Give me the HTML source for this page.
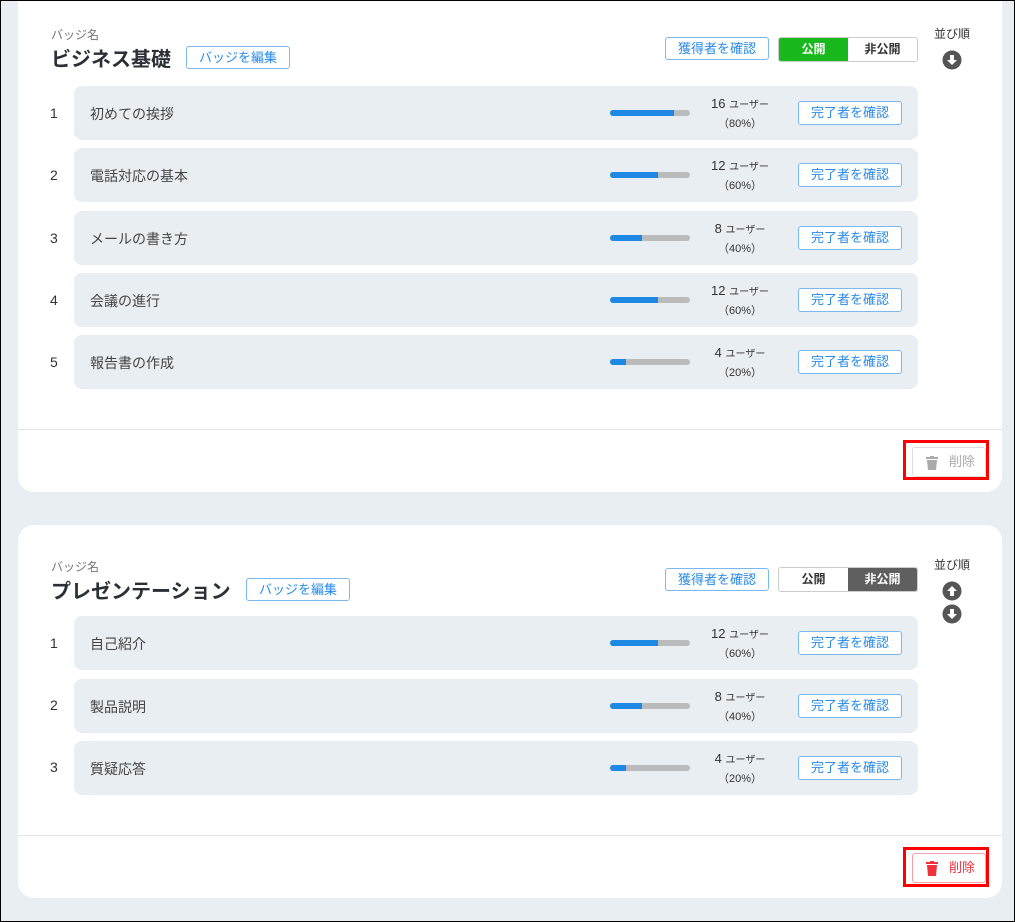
<!DOCTYPE html>
<html><head><meta charset="utf-8"><style>
*{box-sizing:border-box;margin:0;padding:0}
body{width:1015px;height:922px;background:#e9eef3;font-family:"Liberation Sans","Noto Sans CJK JP",sans-serif;position:relative;overflow:hidden;color:#333}
.frame{position:absolute;left:0;top:0;width:1015px;height:922px;border:1px solid #000;z-index:5;pointer-events:none}
.card{position:absolute;left:18px;width:984px;background:#fff;border-radius:16px}
.abs{position:absolute}
.lbl{font-size:12px;color:#777}
.title{font-size:20px;font-weight:bold;color:#2b2f36}
.btn{position:absolute;border:1px solid #7ab8f0;border-radius:3px;color:#2a8be6;font-size:13px;text-align:center;background:#fff}
.row{position:absolute;left:56px;width:844px;height:54px;background:#e9eef3;border-radius:8px}
.num{position:absolute;left:32px;font-size:14px;color:#333}
.row .name{position:absolute;left:16px;top:18px;font-size:14px;color:#444}
.bar{position:absolute;left:536px;top:24px;width:80px;height:6px;background:#bbb;border-radius:3px;overflow:hidden}
.bar i{display:block;height:100%;background:#1e88e5}
.cnt{position:absolute;left:616px;width:100px;text-align:center;font-size:13px;line-height:17px;top:9px;color:#333}
.cnt small{font-size:10px}
.row .btn{left:724px;top:15px;width:104px;height:24px;line-height:22px}
.tog{position:absolute;width:140px;height:25px;border:1px solid #ccc;border-radius:3px;display:flex;overflow:hidden;font-size:12px;font-weight:bold}
.tog div{flex:1;text-align:center;line-height:23px}
.sep{position:absolute;left:0;width:984px;height:1px;background:#e3e3e3}
.del{position:absolute;width:74px;height:30px;border:1px solid #ddd;border-radius:3px;font-size:13px;line-height:28px;padding-left:36px}
.redbox{position:absolute;border:3px solid #f00;width:86px;height:40px}
</style></head><body>
<div class="frame"></div>

<div class="card" style="top:-17px;height:509px">
 <div class="abs lbl" style="left:33px;top:43px">バッジ名</div>
 <div class="abs title" style="left:33px;top:60px">ビジネス基礎</div>
 <div class="btn" style="left:168px;top:63px;width:104px;height:23px;line-height:21px">バッジを編集</div>
 <div class="btn" style="left:647px;top:54px;width:104px;height:23px;line-height:21px">獲得者を確認</div>
 <div class="tog" style="left:760px;top:54px"><div style="background:#19b91e;color:#fff">公開</div><div style="color:#333">非公開</div></div>
 <div class="abs" style="left:916px;top:42px;font-size:12px">並び順</div>
 <svg class="abs" style="left:924px;top:67px" width="20" height="20" viewBox="0 0 20 20"><circle cx="10" cy="10" r="9.5" fill="#555"/><path d="M8 5h4v5h3l-5 5-5-5h3z" fill="#fff"/></svg>

 <div class="num" style="top:122px">1</div>
 <div class="row" style="top:103px"><div class="name">初めての挨拶</div><div class="bar"><i style="width:80%"></i></div><div class="cnt">16 <small>ユーザー</small><br><small style="font-size:11px">（80%）</small></div><div class="btn">完了者を確認</div></div>
 <div class="num" style="top:184px">2</div>
 <div class="row" style="top:165px"><div class="name">電話対応の基本</div><div class="bar"><i style="width:60%"></i></div><div class="cnt">12 <small>ユーザー</small><br><small style="font-size:11px">（60%）</small></div><div class="btn">完了者を確認</div></div>
 <div class="num" style="top:247px">3</div>
 <div class="row" style="top:228px"><div class="name">メールの書き方</div><div class="bar"><i style="width:40%"></i></div><div class="cnt">8 <small>ユーザー</small><br><small style="font-size:11px">（40%）</small></div><div class="btn">完了者を確認</div></div>
 <div class="num" style="top:309px">4</div>
 <div class="row" style="top:290px"><div class="name">会議の進行</div><div class="bar"><i style="width:60%"></i></div><div class="cnt">12 <small>ユーザー</small><br><small style="font-size:11px">（60%）</small></div><div class="btn">完了者を確認</div></div>
 <div class="num" style="top:371px">5</div>
 <div class="row" style="top:352px"><div class="name">報告書の作成</div><div class="bar"><i style="width:20%"></i></div><div class="cnt">4 <small>ユーザー</small><br><small style="font-size:11px">（20%）</small></div><div class="btn">完了者を確認</div></div>

 <div class="sep" style="top:446px"></div>
 <div class="redbox" style="left:885px;top:457px"></div>
 <div class="del" style="left:894px;top:464px;color:#aaa"><svg class="abs" style="left:13px;top:8px" width="12" height="14" viewBox="0 0 12 14"><rect x="0" y="1" width="12" height="2" fill="#aaa"/><rect x="4" y="0" width="4" height="2" fill="#aaa"/><path d="M1 4h10l-1 10H2z" fill="#aaa"/></svg>削除</div>
</div>

<div class="card" style="top:525px;height:373px">
 <div class="abs lbl" style="left:33px;top:33px">バッジ名</div>
 <div class="abs title" style="left:33px;top:50px">プレゼンテーション</div>
 <div class="btn" style="left:228px;top:53px;width:104px;height:23px;line-height:21px">バッジを編集</div>
 <div class="btn" style="left:647px;top:43px;width:104px;height:23px;line-height:21px">獲得者を確認</div>
 <div class="tog" style="left:760px;top:42px"><div style="color:#333">公開</div><div style="background:#5f5f5f;color:#fff">非公開</div></div>
 <div class="abs" style="left:916px;top:31px;font-size:12px">並び順</div>
 <svg class="abs" style="left:924px;top:56px" width="20" height="20" viewBox="0 0 20 20"><circle cx="10" cy="10" r="9.5" fill="#555"/><path d="M8 15h4v-5h3l-5-5-5 5h3z" fill="#fff"/></svg>
 <svg class="abs" style="left:924px;top:79px" width="20" height="20" viewBox="0 0 20 20"><circle cx="10" cy="10" r="9.5" fill="#555"/><path d="M8 5h4v5h3l-5 5-5-5h3z" fill="#fff"/></svg>

 <div class="num" style="top:110px">1</div>
 <div class="row" style="top:91px"><div class="name">自己紹介</div><div class="bar"><i style="width:60%"></i></div><div class="cnt">12 <small>ユーザー</small><br><small style="font-size:11px">（60%）</small></div><div class="btn">完了者を確認</div></div>
 <div class="num" style="top:172px">2</div>
 <div class="row" style="top:154px"><div class="name">製品説明</div><div class="bar"><i style="width:40%"></i></div><div class="cnt">8 <small>ユーザー</small><br><small style="font-size:11px">（40%）</small></div><div class="btn">完了者を確認</div></div>
 <div class="num" style="top:234px">3</div>
 <div class="row" style="top:216px"><div class="name">質疑応答</div><div class="bar"><i style="width:20%"></i></div><div class="cnt">4 <small>ユーザー</small><br><small style="font-size:11px">（20%）</small></div><div class="btn">完了者を確認</div></div>

 <div class="sep" style="top:310px"></div>
 <div class="redbox" style="left:885px;top:322px"></div>
 <div class="del" style="left:894px;top:328px;color:#f0323c;border-color:#f5a0a5"><svg class="abs" style="left:13px;top:7px" width="12" height="15" viewBox="0 0 12 15"><rect x="0" y="1" width="12" height="2" fill="#f0323c"/><rect x="4" y="0" width="4" height="2" fill="#f0323c"/><path d="M1 4h10l-1 11H2z" fill="#f0323c"/></svg>削除</div>
</div>
</body></html>
